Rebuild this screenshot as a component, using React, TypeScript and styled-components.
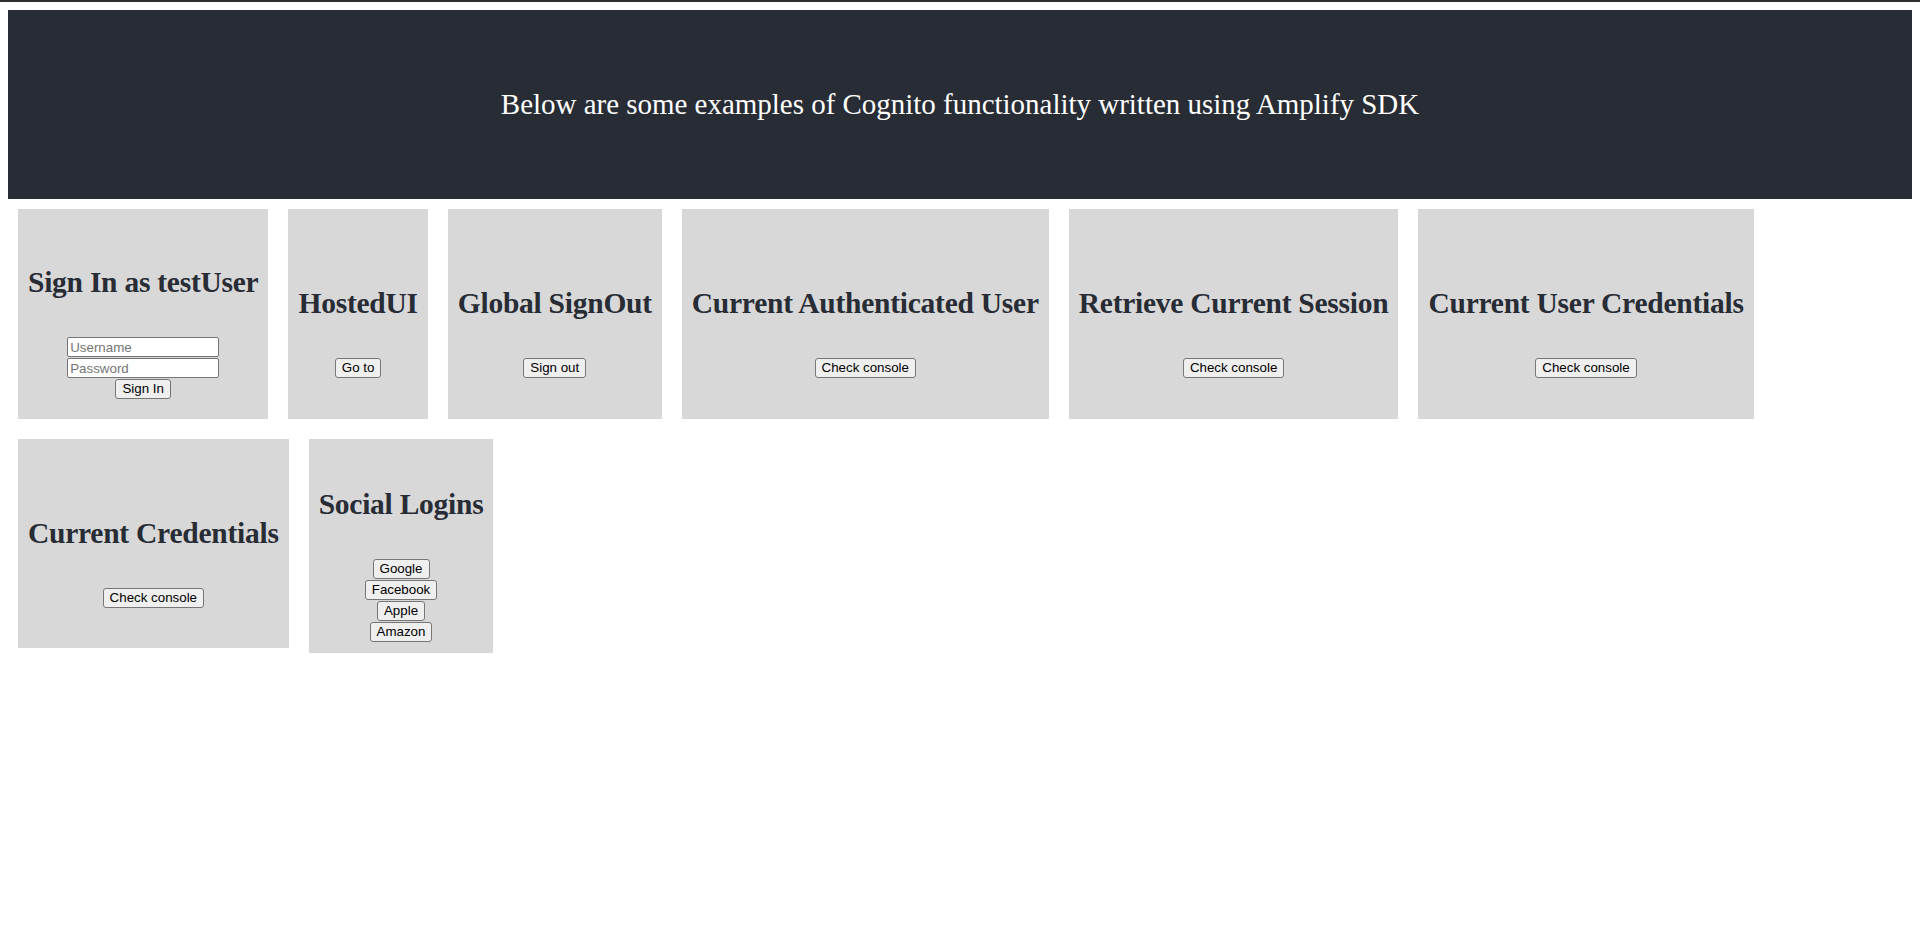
import React from "react";
import styled, { createGlobalStyle } from "styled-components";

const GlobalStyle = createGlobalStyle`
  html, body { background: #ffffff; }
  body {
    margin: 0;
    padding: 8px;
    border-top: 2px solid #2e2e2e;
    font-family: "Liberation Serif", "Times New Roman", serif;
  }
`;

const Page = styled.div`
  display: flex;
  flex-direction: column;
`;

const Header = styled.header`
  height: 189px;
  background: #282c34;
  color: #ffffff;
  display: flex;
  align-items: center;
  justify-content: center;
  font-size: 28.96px;
  font-family: "Liberation Serif", "Times New Roman", serif;
`;

const CardGrid = styled.main`
  display: flex;
  flex-wrap: wrap;
  align-items: flex-start;
`;

const Card = styled.section`
  margin: 10px;
  padding: 24.6px 10px 11px;
  min-height: 174px;
  background: #d8d8d8;
  display: flex;
  flex-direction: column;
  justify-content: center;
  align-items: center;
`;

const Title = styled.h1`
  margin: 21.44px 0 20.44px;
  padding-top: 1px;
  font-size: 29.5px;
  letter-spacing: -0.25px;
  font-weight: bold;
  line-height: 36.8px;
  color: #282c34;
  white-space: nowrap;
  font-family: "Liberation Serif", "Times New Roman", serif;
`;

const Controls = styled.div`
  margin-top: 16px;
  display: flex;
  flex-direction: column;
  align-items: center;
  gap: 1px;
`;

const Button = styled.button`
  height: 20px;
  box-sizing: border-box;
  padding: 0 6px;
  border: 1px solid #767676;
  border-radius: 3px;
  background: #efefef;
  color: #000000;
  font-family: "Liberation Sans", Arial, sans-serif;
  font-size: 13.33px;
  line-height: 16px;
  cursor: default;
`;

const Input = styled.input`
  width: 152px;
  height: 20px;
  box-sizing: border-box;
  padding: 1px 2px;
  border: 1px solid #767676;
  border-radius: 2px;
  background: #ffffff;
  font-family: "Liberation Sans", Arial, sans-serif;
  font-size: 13.33px;
  &::placeholder { color: #757575; }
`;

type CardDef = { title: string; buttons: string[] };

const simpleCards: CardDef[] = [
  { title: "HostedUI", buttons: ["Go to"] },
  { title: "Global SignOut", buttons: ["Sign out"] },
  { title: "Current Authenticated User", buttons: ["Check console"] },
  { title: "Retrieve Current Session", buttons: ["Check console"] },
  { title: "Current User Credentials", buttons: ["Check console"] },
  { title: "Current Credentials", buttons: ["Check console"] },
  { title: "Social Logins", buttons: ["Google", "Facebook", "Apple", "Amazon"] },
];

export default function App() {
  return (
    <>
      <GlobalStyle />
      <Page>
        <Header>Below are some examples of Cognito functionality written using Amplify SDK</Header>
        <CardGrid>
          <Card>
            <Title>Sign In as testUser</Title>
            <Controls>
              <Input type="text" placeholder="Username" />
              <Input type="password" placeholder="Password" />
              <Button>Sign In</Button>
            </Controls>
          </Card>
          {simpleCards.map((c) => (
            <Card key={c.title}>
              <Title>{c.title}</Title>
              <Controls>
                {c.buttons.map((b) => (
                  <Button key={b}>{b}</Button>
                ))}
              </Controls>
            </Card>
          ))}
        </CardGrid>
      </Page>
    </>
  );
}
